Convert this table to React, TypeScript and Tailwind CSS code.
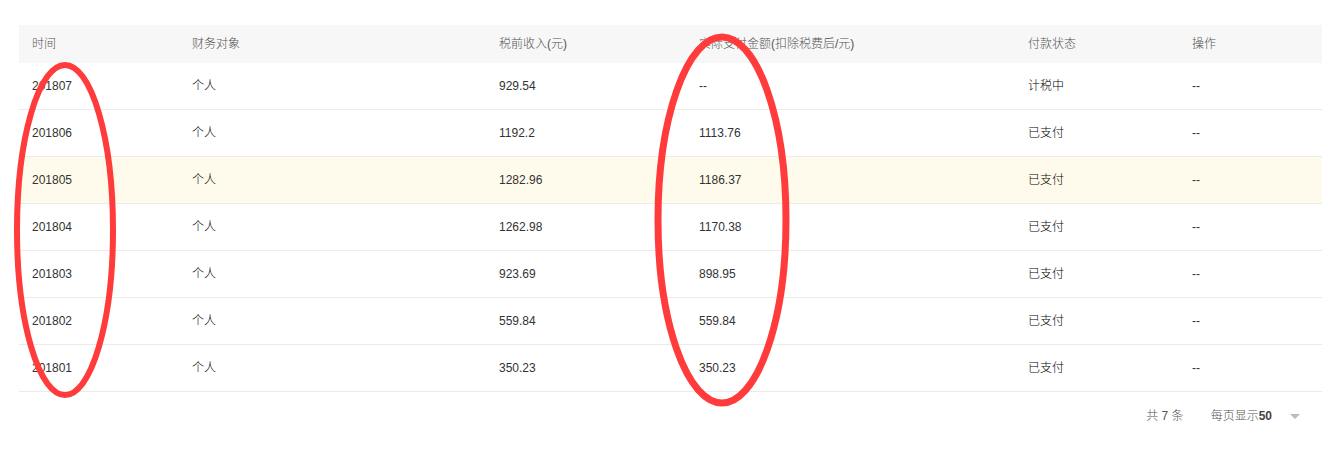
import React from "react";

const rows = [
  { t: "201807", who: "个人", pre: "929.54", real: "--", status: "计税中", hl: false },
  { t: "201806", who: "个人", pre: "1192.2", real: "1113.76", status: "已支付", hl: false },
  { t: "201805", who: "个人", pre: "1282.96", real: "1186.37", status: "已支付", hl: true },
  { t: "201804", who: "个人", pre: "1262.98", real: "1170.38", status: "已支付", hl: false },
  { t: "201803", who: "个人", pre: "923.69", real: "898.95", status: "已支付", hl: false },
  { t: "201802", who: "个人", pre: "559.84", real: "559.84", status: "已支付", hl: false },
  { t: "201801", who: "个人", pre: "350.23", real: "350.23", status: "已支付", hl: false },
];

const cols = "grid grid-cols-[160px_307px_200px_329px_164px_1fr]";

export default function App() {
  return (
    <div
      className="relative w-[1322px] h-[450px] bg-white text-[12px] text-[#333]"
      style={{ fontFamily: '"Liberation Sans", Arial, "Noto Sans CJK SC", sans-serif' }}
    >
      <div className="pt-[25px] pl-[19px]">
        <div className={`${cols} h-[38px] items-center bg-[#f7f7f7] text-[#555] font-light`}>
          <div className="pl-[13px]">时间</div>
          <div className="pl-[13px]">财务对象</div>
          <div className="pl-[13px]">税前收入(元)</div>
          <div className="pl-[13px]">实际支付金额(扣除税费后/元)</div>
          <div className="pl-[13px]">付款状态</div>
          <div className="pl-[13px]">操作</div>
        </div>
        {rows.map((r) => (
          <div
            key={r.t}
            className={`${cols} h-[47px] items-center border-b border-[#ebebeb] ${r.hl ? "bg-[#fffbec]" : ""}`}
          >
            <div className="pl-[13px]">{r.t}</div>
            <div className="pl-[13px] text-black font-light">{r.who}</div>
            <div className="pl-[13px]">{r.pre}</div>
            <div className="pl-[13px]">{r.real}</div>
            <div className="pl-[13px] text-black font-light">{r.status}</div>
            <div className="pl-[13px]">--</div>
          </div>
        ))}
        <div className="flex items-center justify-end h-[48px] pr-[22px] text-[#555] font-light">
          <span>共 7 条</span>
          <span className="ml-[27px]">
            每页显示<b className="text-[#444] font-bold">50</b>
          </span>
          <span className="ml-[18px] w-0 h-0 border-l-[5px] border-r-[5px] border-t-[5px] border-l-transparent border-r-transparent border-t-[#bbb]" />
        </div>
      </div>

      {/* hand drawn annotation rings */}
      <svg className="absolute left-0 top-0 pointer-events-none" width="1322" height="450">
        <ellipse cx="65" cy="230" rx="48" ry="165" fill="none" stroke="#ff3b3b" strokeWidth="6" />
        <ellipse cx="722" cy="220" rx="64" ry="183" fill="none" stroke="#ff3b3b" strokeWidth="7" />
      </svg>
    </div>
  );
}
